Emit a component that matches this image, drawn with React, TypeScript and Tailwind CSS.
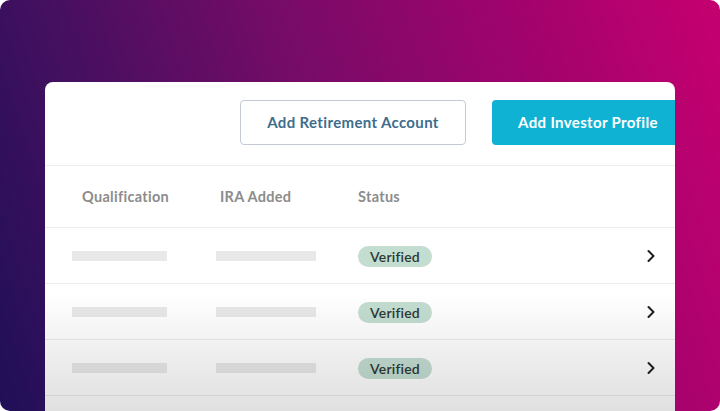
import React from "react";

const font = { fontFamily: "Lato, 'Open Sans', 'Liberation Sans', sans-serif" };

function Chevron() {
  return (
    <svg width="10" height="14" viewBox="0 0 10 14" fill="none">
      <path d="M2.5 2L7.5 7L2.5 12" stroke="#1f1f1f" strokeWidth="2" strokeLinecap="round" strokeLinejoin="round" />
    </svg>
  );
}

function Row() {
  return (
    <div className="flex h-[56px] items-center border-b border-[#ececec] pl-[27px] pr-[19px]">
      <div className="w-[144px]">
        <div className="h-[10px] w-[95px] bg-[#e8e8e8]" />
      </div>
      <div className="w-[142px]">
        <div className="h-[10px] w-[100px] bg-[#e8e8e8]" />
      </div>
      <div className="flex-1">
        <span className="inline-flex h-[21px] w-[74px] items-center justify-center rounded-full bg-[#c3ddd1] text-[14px] font-semibold tracking-[0.2px] text-[#2e3833]">
          Verified
        </span>
      </div>
      <Chevron />
    </div>
  );
}

export default function App() {
  return (
    <div className="h-[411px] w-[720px] bg-white" style={font}>
      <div className="relative flex h-[411px] w-[720px] flex-col overflow-hidden rounded-[10px] bg-[linear-gradient(72deg,#1f0f58_0%,#43105f_20%,#7a0b68_50%,#a0036d_75%,#c6006f_100%)] px-[45px] pt-[82px]">
        <div className="relative flex-1 overflow-hidden rounded-t-[8px] bg-white">
          <div className="flex h-[84px] items-start gap-[26px] border-b border-[#ececec] pl-[195px] pt-[18px]">
            <button className="flex h-[45px] w-[226px] shrink-0 items-center justify-center rounded-[4px] border border-[#c3cad3] bg-white text-[15px] font-bold tracking-[0.35px] text-[#3d6d8d]">
              Add Retirement Account
            </button>
            <button className="flex h-[45px] w-[192px] shrink-0 items-center justify-center rounded-[4px] bg-[#10b2d4] text-[15px] font-bold tracking-[0.35px] text-white">
              Add Investor Profile
            </button>
          </div>
          <div className="flex h-[62px] items-center border-b border-[#ececec] pl-[37px] text-[14.5px] font-bold tracking-[0.3px] text-[#8c8c8c]">
            <div className="w-[138px]">Qualification</div>
            <div className="w-[138px]">IRA Added</div>
            <div>Status</div>
          </div>
          <Row />
          <Row />
          <Row />
          <div className="h-[56px] border-b border-[#ececec]" />
          <div className="pointer-events-none absolute inset-x-0 bottom-0 h-[118px] bg-[linear-gradient(to_bottom,rgba(0,0,0,0)_0%,rgba(0,0,0,0.07)_55%,rgba(0,0,0,0.12)_100%)]" />
        </div>
      </div>
    </div>
  );
}
